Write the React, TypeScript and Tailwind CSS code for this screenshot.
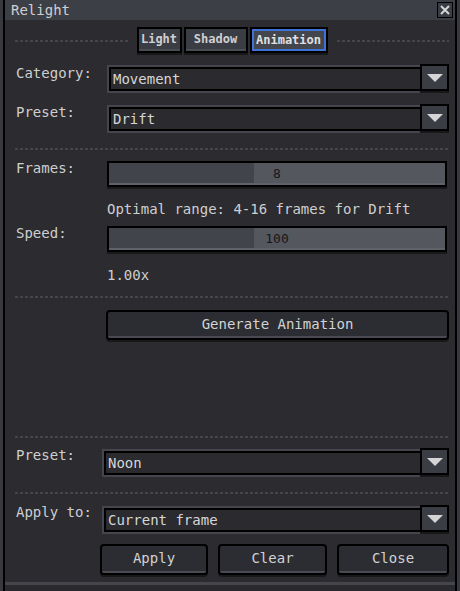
import React from "react";

const FONT = "font-['DejaVu_Sans_Mono','Liberation_Mono',monospace]";

function Dashes({ className = "" }: { className?: string }) {
  return (
    <div
      className={`h-[2px] bg-[repeating-linear-gradient(90deg,#45464c_0_3px,transparent_3px_5px)] ${className}`}
    />
  );
}

function Arrow() {
  return (
    <div className="w-[29px] h-[27px] -mt-[1px] border-2 border-black bg-[#3b3d45] shadow-[0_2px_0_#18181b] flex items-center justify-center">
      <svg width="16" height="8" viewBox="0 0 16 8">
        <polygon points="0,0 16,0 8,8" fill="#d4d4d4" />
      </svg>
    </div>
  );
}

function Dropdown({ value }: { value: string }) {
  return (
    <div className="flex-1 flex items-start">
      <div className="flex-1 h-[28px] border-2 border-r-0 border-[#45464d]">
        <div className="h-full border-2 border-r-0 border-black bg-[#2a2a2f] flex items-center pl-[2px] text-[14px] text-[#d6d6d6]">
          {value}
        </div>
      </div>
      <Arrow />
    </div>
  );
}

function Slider({ value }: { value: string }) {
  return (
    <div className="flex-1 h-[26px] border-2 border-black bg-[#55575f] shadow-[0_2px_0_#18181b] relative">
      <div className="absolute left-0 top-0 bottom-0 w-[145px] bg-[#42444c]" />
      <div className="absolute left-0 right-0 bottom-0 h-[2px] bg-[#60626a]" />
      <div className="relative h-full flex items-center justify-center text-[13px] text-[#161618]">
        {value}
      </div>
    </div>
  );
}

function Button({ label, className = "" }: { label: string; className?: string }) {
  return (
    <div
      className={`border-2 border-black rounded-[4px] bg-[#2c2d32] shadow-[0_2px_0_#18181b] ${className}`}
    >
      <div className="h-full rounded-[2px] border-b-2 border-[#4a4b52] flex items-center justify-center text-[14px] text-[#d2d2d2]">
        {label}
      </div>
    </div>
  );
}

function Tab({ label, active, className = "" }: { label: string; active?: boolean; className?: string }) {
  return (
    <div
      className={`h-[26px] border-2 border-black shadow-[0_2px_0_#18181b] ${active ? "bg-[#44464e]" : "bg-[#3b3d45]"} ${className}`}
    >
      <div
        className={`h-full flex items-center justify-center text-[12px] font-bold ${active ? "border-2 border-[#3f72d4] text-[#e0e0e0]" : "border-b-2 border-[#4b4d55] text-[#d0d0d0]"}`}
      >
        {label}
      </div>
    </div>
  );
}

export default function App() {
  return (
    <div className={`w-[460px] h-[591px] bg-[#38393f] pl-[3px] pr-[3px] ${FONT}`}>
      <div className="h-full border-x-2 border-black flex flex-col bg-[#232327]">
        <div className="h-[20px] bg-[#3d3f47] flex items-center justify-between pl-[6px] pr-[2px]">
          <span className="text-[14px] text-[#cfcfcf]">Relight</span>
          <div className="w-[16px] h-[16px] border border-black bg-[#3b3d45] flex items-center justify-center">
            <svg width="10" height="10" viewBox="0 0 10 10">
              <path d="M1 1 L9 9 M9 1 L1 9" stroke="#d6d6d6" strokeWidth="2" />
            </svg>
          </div>
        </div>

        <div className="flex-1 bg-[#2b2b30] flex flex-col pl-[10px] pr-[6px] border-b-[3px] border-[#45464c] text-[#cfcfcf] text-[14px]">
          <div className="flex items-center mt-[7px] h-[28px]">
            <Dashes className="flex-1" />
            <div className="flex gap-[2px] mx-[9px] -mt-[2px]">
              <Tab label="Light" className="w-[45px]" />
              <Tab label="Shadow" className="w-[64px]" />
              <Tab label="Animation" active className="w-[78px]" />
            </div>
            <Dashes className="flex-1" />
          </div>

          <div className="flex mt-[10px] h-[28px]">
            <div className="w-[92px] -mt-[2px] pl-[1px]">Category:</div>
            <Dropdown value="Movement" />
          </div>
          <div className="flex mt-[12px] h-[28px]">
            <div className="w-[92px] -mt-[3px] pl-[1px]">Preset:</div>
            <Dropdown value="Drift" />
          </div>

          <Dashes className="mt-[15px]" />

          <div className="flex mt-[11px] pr-[2px]">
            <div className="w-[92px] -mt-[3px] pl-[1px]">Frames:</div>
            <Slider value="8" />
          </div>
          <div className="pl-[92px] mt-[12px] h-[18px]">Optimal range: 4-16 frames for Drift</div>
          <div className="flex mt-[9px] pr-[2px]">
            <div className="w-[92px] -mt-[3px] pl-[1px]">Speed:</div>
            <Slider value="100" />
          </div>
          <div className="pl-[92px] mt-[13px] h-[18px]">1.00x</div>

          <Dashes className="mt-[13px]" />

          <Button label="Generate Animation" className="ml-[91px] mt-[12px] h-[30px]" />

          <div className="flex-1" />

          <Dashes />

          <div className="flex mt-[11px] h-[28px]">
            <div className="w-[87px] -mt-[4px] pl-[1px]">Preset:</div>
            <Dropdown value="Noon" />
          </div>

          <Dashes className="mt-[15px]" />

          <div className="flex mt-[12px] h-[28px]">
            <div className="w-[87px] -mt-[4px] pl-[1px]">Apply to:</div>
            <Dropdown value="Current frame" />
          </div>

          <div className="flex gap-[10px] ml-[85px] mt-[10px] mb-[7px]">
            <Button label="Apply" className="w-[108px] h-[31px]" />
            <Button label="Clear" className="w-[109px] h-[31px]" />
            <Button label="Close" className="flex-1 h-[31px]" />
          </div>
        </div>
        <div className="h-[6px] bg-[#2a2a2e]" />
      </div>
    </div>
  );
}
